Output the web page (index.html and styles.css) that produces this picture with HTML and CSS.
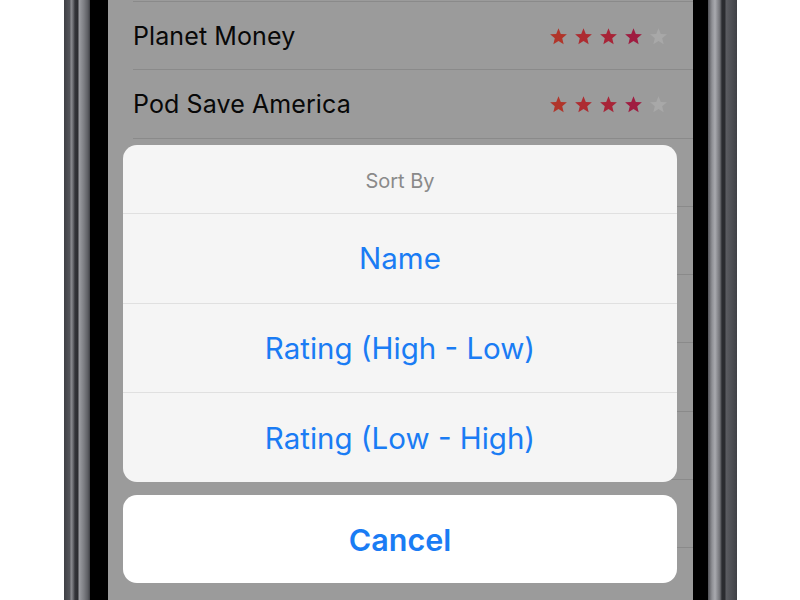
FILE: index.html
```html
<!DOCTYPE html>
<html>
<head>
<meta charset="utf-8">
<link rel="stylesheet" href="styles.css">
</head>
<body>
<div class="phone">
  <div class="bezel-left"></div>
  <div class="screen">
    <div class="list">
      <div class="row"><span class="title">Planet Money</span><span class="stars">
        <svg class="star s1" viewBox="0 0 24 24"><polygon points="12,1.5 14.9,8.7 22.6,9.2 16.7,14.2 18.5,21.8 12,17.6 5.5,21.8 7.3,14.2 1.4,9.2 9.1,8.7"/></svg>
        <svg class="star s2" viewBox="0 0 24 24"><polygon points="12,1.5 14.9,8.7 22.6,9.2 16.7,14.2 18.5,21.8 12,17.6 5.5,21.8 7.3,14.2 1.4,9.2 9.1,8.7"/></svg>
        <svg class="star s3" viewBox="0 0 24 24"><polygon points="12,1.5 14.9,8.7 22.6,9.2 16.7,14.2 18.5,21.8 12,17.6 5.5,21.8 7.3,14.2 1.4,9.2 9.1,8.7"/></svg>
        <svg class="star s4" viewBox="0 0 24 24"><polygon points="12,1.5 14.9,8.7 22.6,9.2 16.7,14.2 18.5,21.8 12,17.6 5.5,21.8 7.3,14.2 1.4,9.2 9.1,8.7"/></svg>
        <svg class="star s0" viewBox="0 0 24 24"><polygon points="12,1.5 14.9,8.7 22.6,9.2 16.7,14.2 18.5,21.8 12,17.6 5.5,21.8 7.3,14.2 1.4,9.2 9.1,8.7"/></svg>
      </span></div>
      <div class="row"><span class="title">Pod Save America</span><span class="stars">
        <svg class="star s1" viewBox="0 0 24 24"><polygon points="12,1.5 14.9,8.7 22.6,9.2 16.7,14.2 18.5,21.8 12,17.6 5.5,21.8 7.3,14.2 1.4,9.2 9.1,8.7"/></svg>
        <svg class="star s2" viewBox="0 0 24 24"><polygon points="12,1.5 14.9,8.7 22.6,9.2 16.7,14.2 18.5,21.8 12,17.6 5.5,21.8 7.3,14.2 1.4,9.2 9.1,8.7"/></svg>
        <svg class="star s3" viewBox="0 0 24 24"><polygon points="12,1.5 14.9,8.7 22.6,9.2 16.7,14.2 18.5,21.8 12,17.6 5.5,21.8 7.3,14.2 1.4,9.2 9.1,8.7"/></svg>
        <svg class="star s4" viewBox="0 0 24 24"><polygon points="12,1.5 14.9,8.7 22.6,9.2 16.7,14.2 18.5,21.8 12,17.6 5.5,21.8 7.3,14.2 1.4,9.2 9.1,8.7"/></svg>
        <svg class="star s0" viewBox="0 0 24 24"><polygon points="12,1.5 14.9,8.7 22.6,9.2 16.7,14.2 18.5,21.8 12,17.6 5.5,21.8 7.3,14.2 1.4,9.2 9.1,8.7"/></svg>
      </span></div>
      <div class="row"></div>
      <div class="row"></div>
      <div class="row"></div>
      <div class="row"></div>
      <div class="row"></div>
      <div class="row"></div>
      <div class="row"></div>
    </div>
    <div class="sheet">
      <div class="group">
        <div class="sheet-title">Sort By</div>
        <div class="action">Name</div>
        <div class="action">Rating (High - Low)</div>
        <div class="action">Rating (Low - High)</div>
      </div>
      <div class="cancel">Cancel</div>
    </div>
  </div>
  <div class="bezel-right"></div>
</div>
</body>
</html>
```

FILE: styles.css
```css
* { box-sizing: border-box; }
html, body {
  margin: 0;
  padding: 0;
  background: #ffffff;
  overflow: hidden;
}
body {
  width: 800px;
  height: 600px;
  font-family: Inter, "Noto Sans", "Liberation Sans", sans-serif;
}
.phone {
  margin-left: 64px;
  width: 673px;
  height: 600px;
  display: flex;
}
.bezel-left {
  width: 44px;
  flex: none;
  background: linear-gradient(to right,
    #3f4045 0px, #55565b 6px,
    #8e8f94 7px, #6b6c71 9px,
    #34353a 11px, #2b2c30 14px,
    #9d9ea3 15px, #7c7d82 20px, #5c5d62 24px,
    #3c3d42 26px, #000000 26px, #000000 44px);
}
.bezel-right {
  width: 44px;
  flex: none;
  background: linear-gradient(to right,
    #000000 0px, #000000 15px,
    #505156 15px, #8f9095 19px, #a9aaaf 22px, #6f7075 27px,
    #2b2c30 29px, #2b2c30 32px,
    #5b5c61 33px, #4a4b50 40px, #3f4045 44px);
}
.screen {
  position: relative;
  width: 585px;
  flex: none;
  height: 600px;
  background: #9b9b9b;
  overflow: hidden;
}
.list {
  padding-top: 1px;
}
.list::before {
  content: "";
  display: block;
  height: 1px;
  margin-left: 25px;
  background: #8a8a8a;
}
.row {
  height: 68.3px;
  display: flex;
  align-items: center;
  justify-content: space-between;
  padding: 0 25px 0 25px;
  position: relative;
}
.row::after {
  content: "";
  position: absolute;
  left: 25px;
  right: 0;
  bottom: 0;
  height: 1px;
  background: #8a8a8a;
}
.title {
  font-size: 25px;
  color: #080808;
  letter-spacing: 0.1px;
}
.stars {
  display: flex;
  gap: 6px;
}
.star {
  width: 19px;
  height: 19px;
  display: block;
}
.s1 { fill: #b1352a; }
.s2 { fill: #ad2c31; }
.s3 { fill: #a82437; }
.s4 { fill: #9f1c40; }
.s0 { fill: #a8a8a8; }

.sheet {
  position: absolute;
  left: 15px;
  top: 145px;
  width: 554px;
  display: flex;
  flex-direction: column;
  gap: 13px;
}
.group {
  height: 337px;
  background: #f5f5f5;
  border-radius: 14px;
  display: flex;
  flex-direction: column;
  overflow: hidden;
}
.sheet-title {
  height: 68px;
  flex: none;
  display: flex;
  align-items: center;
  justify-content: center;
  padding-top: 3px;
  font-size: 20px;
  color: #8a8a8a;
}
.action {
  flex: 1;
  border-top: 1px solid #e0e0e0;
  display: flex;
  align-items: center;
  justify-content: center;
  font-size: 29.5px;
  color: #1a7cf4;
}
.cancel {
  height: 88px;
  background: #ffffff;
  border-radius: 14px;
  display: flex;
  align-items: center;
  justify-content: center;
  font-size: 30.5px;
  font-weight: 600;
  color: #1a7cf4;
}
```
